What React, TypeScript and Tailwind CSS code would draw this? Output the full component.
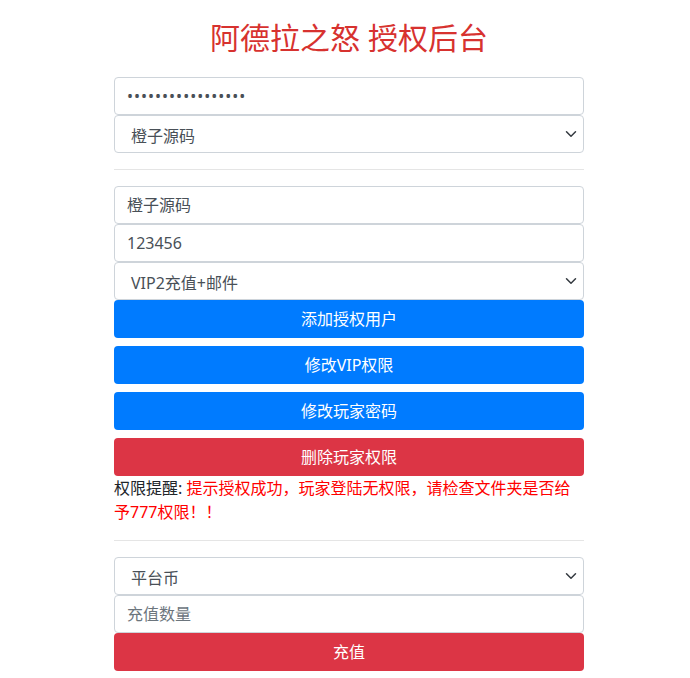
const font = { fontFamily: '"Noto Sans", "Noto Sans CJK SC", sans-serif' };

const Chevron = () => (
  <svg width="12" height="12" viewBox="0 0 16 16" className="text-[#343a40]">
    <path
      d="M2 5l6 6 6-6"
      fill="none"
      stroke="currentColor"
      strokeWidth="2"
      strokeLinecap="round"
      strokeLinejoin="round"
    />
  </svg>
);

const Field = ({ children, muted }: { children: React.ReactNode; muted?: boolean }) => (
  <div
    className={`h-[38px] border border-[#ced4da] rounded-[4px] bg-white flex items-center px-3 text-base ${
      muted ? 'text-[#6c757d]' : 'text-[#495057]'
    }`}
  >
    {children}
  </div>
);

const Select = ({ label }: { label: string }) => (
  <div className="h-[38px] border border-[#ced4da] rounded-[4px] bg-white flex items-center justify-between pl-4 pr-[6px] text-base text-[#495057]">
    <span className="pt-[3px]">{label}</span>
    <Chevron />
  </div>
);

const Button = ({ label, red }: { label: string; red?: boolean }) => (
  <div
    className={`h-[38px] rounded-[4px] flex items-center justify-center text-base text-white ${
      red ? 'bg-[#dc3545]' : 'bg-[#007bff]'
    }`}
  >
    {label}
  </div>
);

const Divider = () => <div className="h-px bg-[#e5e5e5] my-4" />;

export default function App() {
  return (
    <div className="min-h-screen bg-white pl-2" style={font}>
      <div className="w-[470px] mx-auto">
        <h2 className="pt-[19px] mb-[21px] text-center text-[30px] leading-[37px] text-[#d7322f]">
          阿德拉之怒 授权后台
        </h2>

        <Field>
          <span className="tracking-[1px] text-[#495057]">•••••••••••••••••</span>
        </Field>
        <Select label="橙子源码" />

        <Divider />

        <Field>橙子源码</Field>
        <Field>123456</Field>
        <Select label="VIP2充值+邮件" />
        <div className="flex flex-col gap-2">
          <Button label="添加授权用户" />
          <Button label="修改VIP权限" />
          <Button label="修改玩家密码" />
          <Button label="删除玩家权限" red />
        </div>
        <p className="text-base leading-6 text-[#212529]">
          权限提醒:{' '}
          <span className="text-[#ff0000]">提示授权成功，玩家登陆无权限，请检查文件夹是否给予777权限！！</span>
        </p>

        <Divider />

        <Select label="平台币" />
        <Field muted>充值数量</Field>
        <Button label="充值" red />
      </div>
    </div>
  );
}
